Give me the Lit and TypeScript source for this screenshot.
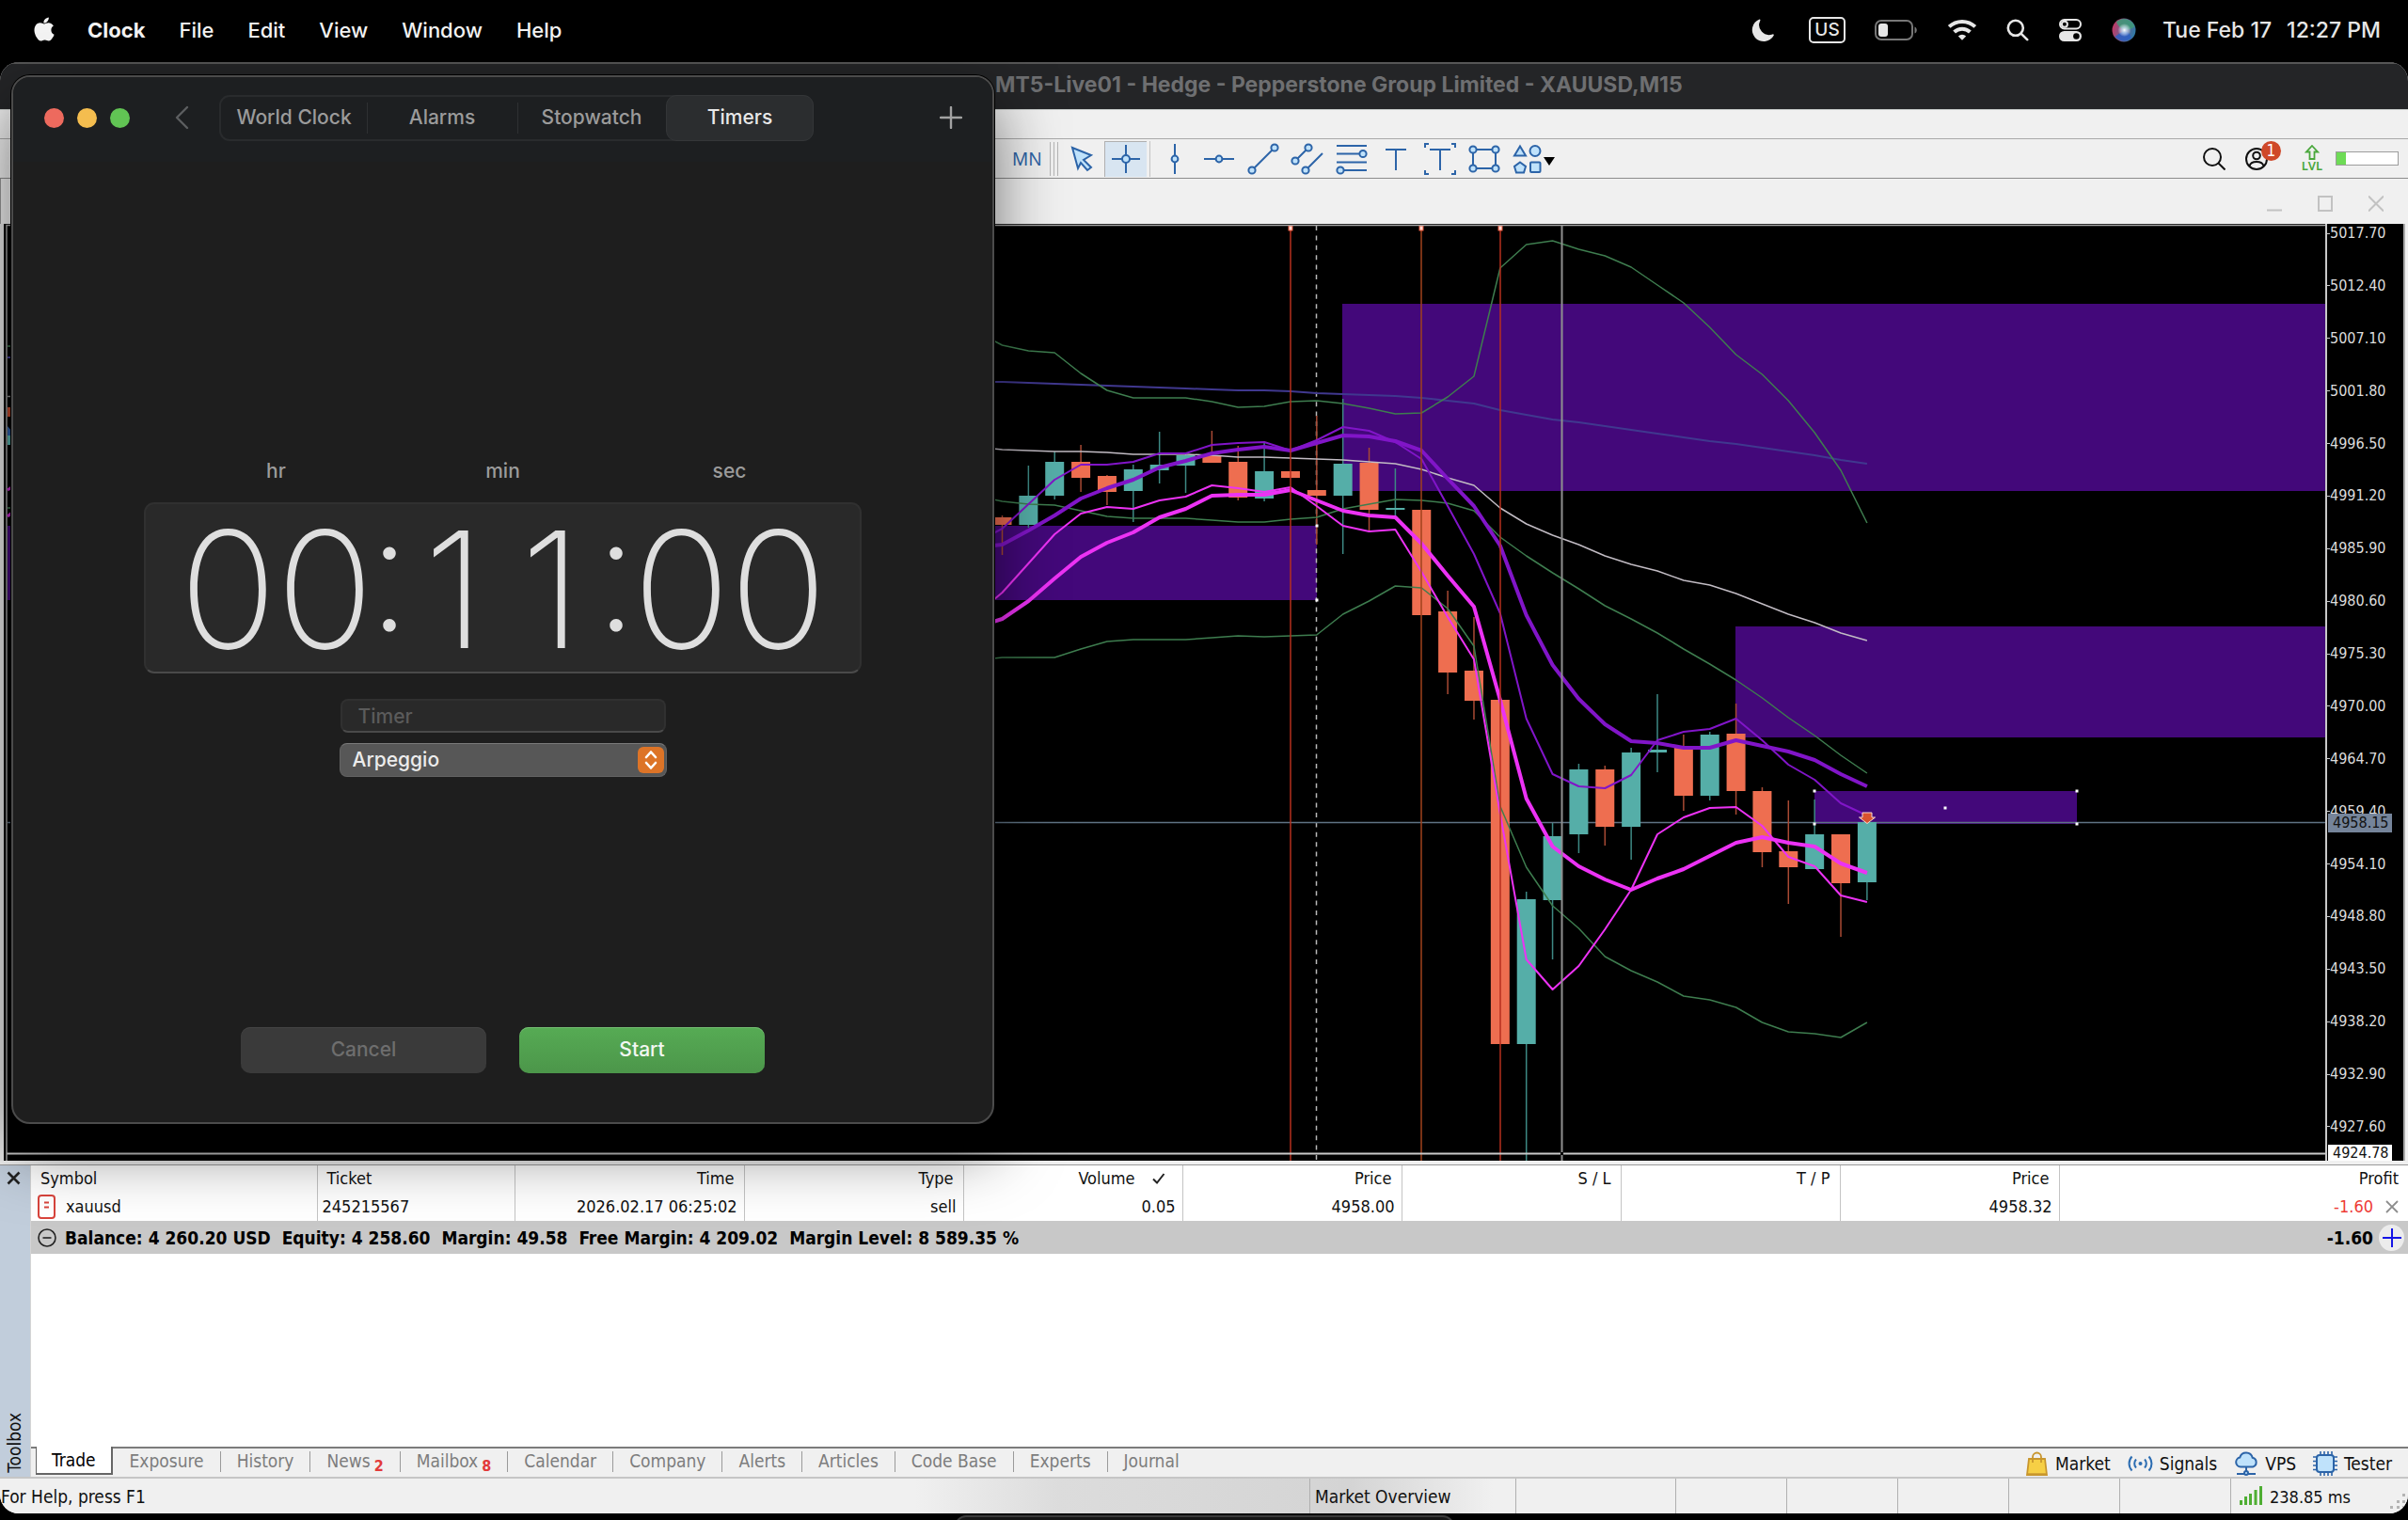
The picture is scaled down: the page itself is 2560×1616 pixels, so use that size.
import { LitElement, html, svg, css, nothing } from "lit";
import { customElement, property } from "lit/decorators.js";
import { classMap } from "lit/directives/class-map.js";

type Point = [number, number];

const UI = css`
  :host {
    --sans: Inter, "Liberation Sans", sans-serif;
    --tahoma: "DejaVu Sans Condensed", "DejaVu Sans", "Noto Sans", sans-serif;
  }
  * {
    box-sizing: border-box;
  }
  button {
    appearance: none;
    border: 0;
    padding: 0;
    margin: 0;
    background: none;
    color: inherit;
    font: inherit;
  }
  a {
    color: inherit;
    text-decoration: none;
  }
  svg {
    display: block;
  }
`;

/* ---------- macOS menu bar ---------- */

@customElement("mac-menu-bar")
export class MacMenuBar extends LitElement {
  static styles = [
    UI,
    css`
      :host {
        display: block;
        background: #000;
        color: #fff;
        font: 500 22px/28px var(--sans);
      }
      .bar {
        display: flex;
        justify-content: space-between;
        align-items: center;
        height: 66px;
        padding: 0 29px 2px 35px;
      }
      .menus,
      .status {
        display: flex;
        align-items: center;
        color: #f4f4f4;
      }
      .menus {
        gap: 36px;
      }
      .app {
        margin-left: -2px;
        font-weight: 700;
      }
      .status {
        gap: 31px;
        color: #e6e6e6;
      }
      .focus {
        margin-right: 5px;
      }
      .layout {
        border: 2px solid #e6e6e6;
        border-radius: 5px;
        width: 39px;
        height: 28px;
        font: 500 19px/24px var(--sans);
        text-align: center;
      }
      .clock {
        display: flex;
        gap: 16px;
        margin-left: -3px;
        font-size: 23px;
        white-space: nowrap;
      }
    `,
  ];

  render() {
    return html`<header class="bar">
      <nav class="menus" aria-label="Menu bar">
        <button aria-label="Apple">
          <svg width="24" height="28" viewBox="0 0 24 28" fill="currentColor">
            <path d="M16.8 0.4c.2 1.600-.4 3.100-1.400 4.300-1 1.200-2.500 2-4 1.900-.2-1.500.5-3.100 1.400-4.100C13.800 1.300 15.500.5 16.800.4z" />
            <path d="M21.900 9.600c-1.500.9-2.500 2.400-2.500 4.300 0 2.200 1.300 4 3.200 4.800-.4 1.300-1 2.500-1.800 3.600-1.100 1.600-2.200 3.200-4 3.200-1.700 0-2.200-1-4.200-1s-2.600 1-4.200 1.100c-1.700.1-3-1.700-4.100-3.300C2 19 .3 13.200 2.600 9.400c1.100-1.900 3.100-3.100 5.200-3.100 1.700 0 3.200 1.100 4.200 1.100 1 0 2.900-1.400 4.900-1.200 1.200.1 3.600.5 5 3.400z" />
          </svg>
        </button>
        <button class="app">Clock</button>
        ${["File", "Edit", "View", "Window", "Help"].map((m) => html`<button>${m}</button>`)}
      </nav>
      <div class="status">
        <svg class="focus" width="26" height="26" viewBox="0 0 26 26" fill="currentColor" role="img" aria-label="Focus on">
          <path d="M9.500 1.500a1 1 0 0 1 .8 1.400A10.500 10.500 0 0 0 23.400 17.400a1 1 0 0 1 1.300 1.300A12.200 12.200 0 1 1 9.500 1.500z" />
        </svg>
        <span class="layout">US</span>
        <svg width="46" height="22" viewBox="0 0 46 22" role="img" aria-label="Battery">
          <rect x="1" y="1" width="39" height="20" rx="6" fill="none" stroke="#777" stroke-width="2" />
          <rect x="4" y="4" width="10" height="14" rx="3" fill="currentColor" />
          <path d="M42.500 7.500c3 1 3 6 0 7z" fill="#777" />
        </svg>
        <svg width="32" height="24" viewBox="0 0 32 24" role="img" aria-label="Wi-Fi" fill="none" stroke="currentColor" stroke-width="4">
          <path d="M2.200 8.400a20 20 0 0 1 27.600 0" />
          <path d="M7.600 14a12.300 12.300 0 0 1 16.800 0" />
          <path d="M16 22.800l-4.200-4.400a6 6 0 0 1 8.400 0z" fill="currentColor" stroke="none" />
        </svg>
        <svg width="24" height="24" viewBox="0 0 24 24" role="img" aria-label="Search" fill="none" stroke="currentColor" stroke-width="2.600" stroke-linecap="round">
          <circle cx="9.800" cy="9.800" r="8" />
          <path d="M15.800 15.800l6.400 6.400" />
        </svg>
        <svg width="26" height="26" viewBox="0 0 26 26" role="img" aria-label="Control Center">
          <rect x="2" y="2" width="22" height="9.500" rx="4.700" fill="none" stroke="currentColor" stroke-width="2" />
          <circle cx="6.900" cy="6.700" r="3" fill="none" stroke="currentColor" stroke-width="2" />
          <rect x="1" y="14" width="24" height="11" rx="5.500" fill="currentColor" />
          <circle cx="19.400" cy="19.500" r="3.300" fill="#000" />
        </svg>
        <svg width="26" height="26" viewBox="0 0 26 26" role="img" aria-label="Siri">
          <defs>
            <radialGradient id="core"><stop offset="0" stop-color="#fff" /><stop offset=".35" stop-color="#cfe3f5" stop-opacity=".8" /><stop offset="1" stop-color="#fff" stop-opacity="0" /></radialGradient>
            <linearGradient id="orb" x1="0" y1=".3" x2="1" y2=".6"><stop offset="0" stop-color="#c8355f" /><stop offset=".4" stop-color="#7d5a8c" /><stop offset="1" stop-color="#2c7aa6" /></linearGradient>
          </defs>
          <circle cx="13" cy="13" r="12.500" fill="url(#orb)" />
          <path d="M5 4a12.400 12.400 0 0 1 19.500 5c-4 4-9 4-12 3S6 8 5 4z" fill="#3d9a78" opacity=".85" />
          <path d="M3.500 20c3-2 6-5 9.500-5.500s7 2 8 7a12.400 12.400 0 0 1-17.500-1.500z" fill="#2d5fc4" opacity=".85" />
          <circle cx="13.500" cy="13" r="7" fill="url(#core)" />
        </svg>
        <time class="clock"><span>Tue Feb 17</span><span>12:27 PM</span></time>
      </div>
    </header>`;
  }
}

/* ---------- price chart ---------- */

const STEP = 27.86;
const barX = (k: number) => 1065.5 + STEP * k;

/* [bullish, body top, body bottom, wick top, wick bottom] */
const CANDLES: [number, number, number, number, number][] = [
  [0, 550, 558, 548, 590], [1, 527, 558, 495, 561], [1, 491, 527, 480, 531], [0, 491, 508, 473, 523],
  [0, 506, 523, 505, 537], [1, 499, 522, 494, 555], [1, 494, 500, 459, 514], [1, 484, 495, 482, 524],
  [0, 484, 492, 458, 492], [0, 491, 529, 474, 532], [1, 501, 530, 471, 533], [0, 501, 508, 501, 508],
  [0, 521, 527, 442, 579], [1, 493, 527, 424, 589], [0, 492, 542, 476, 565], [1, 540, 542, 498, 552],
  [0, 542, 654, 542, 654], [0, 650, 715, 628, 738], [0, 713, 745, 656, 765], [0, 744, 1110, 744, 1110],
  [1, 956, 1110, 948, 1234], [1, 889, 957, 875, 1020], [1, 818, 887, 812, 907], [0, 818, 879, 814, 899],
  [1, 800, 879, 795, 914], [1, 797, 800, 738, 821], [0, 795, 846, 781, 862], [1, 781, 846, 778, 851],
  [0, 780, 841, 748, 866], [0, 841, 906, 837, 922], [0, 905, 922, 851, 961], [1, 887, 924, 850, 924],
  [0, 887, 939, 887, 996], [1, 874, 938, 874, 957],
];

interface Series {
  name: string;
  start: number;
  values: number[];
}

/* One value per bar; `start` is the level at the left edge of the visible range. */
const SERIES: Series[] = [
  { name: "slate", start: 406, values: [406, 407, 408, 409, 410, 411, 412, 413, 414, 415, 415, 416, 418, 419, 420, 421, 423, 426, 429, 436, 441, 446, 449, 453, 457, 461, 465, 469, 472, 476, 480, 484, 489, 493] },
  { name: "band", start: 362, values: [367, 373, 375, 397, 415, 423, 423, 423, 427, 433, 432, 427, 426, 429, 434, 440, 439, 422, 400, 285, 260, 256, 265, 272, 284, 303, 322, 348, 377, 398, 426, 460, 500, 556] },
  { name: "band", start: 531, values: [533, 536, 537, 543, 549, 551, 551, 551, 553, 555, 555, 552, 550, 541, 536, 531, 532, 535, 543, 571, 591, 609, 626, 644, 658, 673, 690, 706, 723, 742, 763, 782, 803, 822] },
  { name: "band", start: 700, values: [699, 699, 699, 690, 682, 680, 680, 680, 678, 676, 677, 676, 675, 653, 639, 623, 625, 647, 687, 857, 922, 963, 987, 1017, 1032, 1044, 1059, 1063, 1071, 1087, 1097, 1099, 1103, 1087] },
  { name: "mean", start: 477, values: [478, 479, 480, 480, 481, 483, 483, 483, 484, 486, 486, 487, 488, 489, 491, 493, 499, 508, 516, 540, 557, 569, 579, 591, 600, 607, 617, 622, 631, 642, 653, 662, 673, 681] },
  { name: "violet", start: 567, values: [562, 536, 510, 494, 494, 491, 482, 482, 473, 471, 470, 479, 468, 454, 458, 470, 488, 538, 589, 652, 764, 823, 836, 838, 824, 787, 778, 775, 764, 787, 813, 829, 854, 867] },
  { name: "violet thick", start: 580, values: [579, 564, 548, 530, 519, 510, 497, 490, 482, 478, 475, 479, 471, 463, 464, 469, 479, 509, 538, 580, 654, 707, 743, 770, 788, 790, 795, 795, 787, 793, 799, 808, 823, 836] },
  { name: "pink", start: 638, values: [630, 599, 568, 546, 539, 541, 532, 528, 516, 519, 523, 518, 538, 559, 565, 563, 608, 656, 701, 865, 1020, 1052, 1027, 988, 946, 887, 869, 859, 858, 878, 911, 921, 952, 959] },
  { name: "pink thick", start: 661, values: [658, 639, 615, 592, 577, 566, 550, 541, 527, 526, 526, 521, 532, 543, 548, 550, 578, 612, 645, 744, 849, 900, 921, 935, 946, 934, 924, 910, 896, 890, 896, 900, 918, 928] },
];

const ZONES: [number, number, number, number][] = [
  [8, 559, 1400, 638],
  [1427, 323, 2472, 522],
  [1845, 666, 2472, 784],
  [1929, 841, 2208, 876],
];

const SESSIONS: [number, string][] = [[1372, "red"], [1511, "amber"], [1595, "red"]];
const ANCHORS: Point[] = [[1400, 559], [1400, 638], [1929, 841], [1929, 876], [2208, 841], [2208, 876], [2068, 859]];

const PRICES = ["5017.70", "5012.40", "5007.10", "5001.80", "4996.50", "4991.20", "4985.90", "4980.60", "4975.30", "4970.00", "4964.70", "4959.40", "4954.10", "4948.80", "4943.50", "4938.20", "4932.90", "4927.60"];

@customElement("price-chart")
export class PriceChart extends LitElement {
  static styles = [
    UI,
    css`
      :host {
        display: flex;
        background: #000;
      }
      .plot {
        flex: 1;
        min-width: 0;
        position: relative;
      }
      .canvas {
        position: absolute;
        inset: 0;
        width: 100%;
        height: 100%;
      }
      .zone { fill: #43087a; }
      .line { fill: none; stroke-width: 1.500; stroke-linejoin: round; }
      .band { stroke: #3e7d4f; }
      .slate { stroke: #40388f; stroke-width: 2; }
      .mean { stroke: #c2bcc4; }
      .violet { stroke: #8115c8; stroke-width: 2; }
      .pink { stroke: #ec32f4; stroke-width: 2; }
      .thick { stroke-width: 4; }
      .up { fill: #55aea8; }
      .down { fill: #ee6e50; }
      .upwick { stroke: #3d8984; stroke-width: 1.500; }
      .downwick { stroke: #a94a34; stroke-width: 1.500; }
      .red { stroke: #b62f1e; stroke-width: 1.500; }
      .amber { stroke: #a1421d; stroke-width: 1.500; }
      .axis {
        width: 83px;
        position: relative;
        border-left: 2px solid #c9c9c9;
        color: #dcdcdc;
        font: 16px/20px var(--tahoma);
      }
      .levels {
        list-style: none;
        margin: 0;
        padding: 0 0 26px;
        height: 100%;
        display: flex;
        flex-direction: column;
        justify-content: space-between;
      }
      .level {
        display: flex;
        align-items: center;
      }
      .level::before {
        content: "";
        width: 3px;
        height: 1px;
        background: #c9c9c9;
      }
      .tag {
        position: absolute;
        left: 1px;
        width: 68px;
        padding-left: 5px;
        color: #111;
      }
      .bid {
        top: 63%;
        background: #75849a;
      }
      .cursor {
        bottom: 0;
        background: #fff;
        line-height: 17px;
      }
    `,
  ];

  private line(s: Series) {
    const pts = [`1056,${s.start}`, ...s.values.map((v, k) => `${barX(k).toFixed(1)},${v}`)];
    return svg`<polyline class="line ${s.name}" points=${pts.join(" ")} />`;
  }

  private candle(c: (typeof CANDLES)[number], k: number) {
    const [up, top, bottom, high, low] = c;
    const x = barX(k);
    return svg`
      <line class=${up ? "upwick" : "downwick"} x1=${x} x2=${x} y1=${high} y2=${low} />
      <rect class=${up ? "up" : "down"} x=${x - 10} y=${top} width="20" height=${bottom - top} />`;
  }

  render() {
    return html`
      <div class="plot">
        <svg class="canvas" viewBox="4 238 2468 996" preserveAspectRatio="none" role="img" aria-label="XAUUSD M15 candlestick chart">
          ${ZONES.map(([x1, y1, x2, y2]) => svg`<rect class="zone" x=${x1} y=${y1} width=${x2 - x1} height=${y2 - y1} />`)}
          <path d="M1399.500 240V1234" stroke="#b9b9b9" stroke-width="1.500" stroke-dasharray="5 5.400" fill="none" />
          <path d="M8 874.500H2472" stroke="#5f7384" stroke-width="1.500" />
          ${CANDLES.map((c, k) => this.candle(c, k))}
          ${SERIES.map((s) => this.line(s))}
          ${SESSIONS.map(([x, tone]) => svg`
            <line class=${tone} x1=${x} x2=${x} y1="240" y2="1234" />
            <rect x=${x - 2} y="240" width="4" height="5" fill="#ffd8cf" stroke="#ee5a3f" stroke-width="1" />`)}
          <path d="M1660.500 240V1234" stroke="#8f8f8f" stroke-width="2" />
          <path d="M7 1226.500H2472" stroke="#c9c9c9" stroke-width="2" />
          <rect x="1659" y="1225" width="3" height="3" fill="#000" />
          <path d="M7 1234V239.500H2472" stroke="#a4a4a4" stroke-width="1.500" fill="none" />
          ${ANCHORS.map(([x, y]) => svg`<rect x=${x - 1.5} y=${y - 1.5} width="3" height="3" fill="#fff" />`)}
          <path d="M1980 864h10v5h3.500l-8.500 6.500-8.500-6.500h3.500z" fill="#d8522e" stroke="#f7d9cf" stroke-width="1" />
          <g>
            <path d="M8 368h5" stroke="#3e7d4f" stroke-width="1.500" />
            <path d="M8 380h5" stroke="#40388f" stroke-width="2" />
            <path d="M8 421.500h5" stroke="#888" stroke-width="1.500" />
            <path d="M8 433h4v10h-4z" fill="#c04a2c" />
            <path d="M8 453l5 6v4h-5z" fill="#2d5fa8" />
            <path d="M8 463h5v10h-5z" fill="#55aea8" />
            <path d="M8 521l6-4M8 549l6-5" stroke="#c028c8" stroke-width="3" />
            <path d="M8 540h5" stroke="#3e7d4f" stroke-width="1.500" />
          </g>
        </svg>
      </div>
      <div class="axis">
        <ol class="levels">
          ${PRICES.map((p) => html`<li class="level">${p}</li>`)}
        </ol>
        <span class="tag bid">4958.15</span>
        <span class="tag cursor">4924.78</span>
      </div>
    `;
  }
}

/* ---------- MetaTrader window ---------- */

const dot = (x: number, y: number, r = 3.4) => svg`<ellipse cx=${x} cy=${y} rx=${r} ry=${r} />`;

const TOOLS: { label: string; art: unknown; active?: boolean; gap?: boolean }[] = [
  { label: "Cursor", art: svg`<path d="M13 7l20 8-8 5 8 8-4 3-7-8-3 6z" />` },
  { label: "Crosshair", active: true, art: svg`<path d="M23 4v30M8 19h30" />${dot(23, 19, 4)}` },
  { label: "Vertical line", gap: true, art: svg`<path d="M23 3v32" />${dot(23, 19)}` },
  { label: "Horizontal line", art: svg`<path d="M7 19h32" />${dot(23, 19)}` },
  { label: "Trendline", art: svg`<path d="M11 31L35 7" />${dot(11, 31, 3.6)}${dot(35, 7, 3.6)}` },
  { label: "Channel", art: svg`<path d="M10 21L24 7M21 31L39 13" />${dot(10, 21, 3.6)}${dot(24, 7, 3.6)}${dot(21, 31, 3.6)}` },
  { label: "Fibonacci", art: svg`<path d="M7 5h32M7 13.500h28M7 22.500h32M11 31h28" />${dot(35, 13.5, 3.6)}${dot(11, 31, 3.6)}` },
  { label: "Text", art: svg`<path d="M12 9h22M23 9v22" />` },
  { label: "Label", art: svg`<path d="M12 9h22M23 9v22M7 7V3h4M35 3h4v4M7 31v4h4M35 35h4v-4" fill="none" />` },
  { label: "Rectangle", art: svg`<path d="M11 9h24v20H11z" fill="none" />${dot(11, 9, 3.6)}${dot(35, 9, 3.6)}${dot(11, 29, 3.6)}${dot(35, 29, 3.6)}` },
  { label: "Shapes", art: svg`<path d="M14 5.500l6 10H8z" /><circle cx="30" cy="10.500" r="5.500" /><path d="M14 22.500l6 4.500-2 6.500h-8l-2-6.500z" /><rect x="25" y="22.500" width="10.500" height="10.500" rx="1" />` },
];

const COLUMNS = [
  { head: "Symbol", cell: "xauusd" },
  { head: "Ticket", cell: "245215567" },
  { head: "Time", cell: "2026.02.17 06:25:02", end: true },
  { head: "Type", cell: "sell", end: true },
  { head: "Volume", cell: "0.05", end: true },
  { head: "Price", cell: "4958.00", end: true },
  { head: "S / L", cell: "", end: true },
  { head: "T / P", cell: "", end: true },
  { head: "Price", cell: "4958.32", end: true },
  { head: "Profit", cell: "-1.60", end: true },
];

const TABS: [string, string?][] = [["Trade"], ["Exposure"], ["History"], ["News", "2"], ["Mailbox", "8"], ["Calendar"], ["Company"], ["Alerts"], ["Articles"], ["Code Base"], ["Experts"], ["Journal"]];

@customElement("trade-toolbox")
export class TradeToolbox extends LitElement {
  static styles = [
    UI,
    css`
      :host {
        display: grid;
        grid-template-columns: 33px 1fr;
        background: #fff;
        color: #111;
        font: 18px/24px var(--tahoma);
      }
      .rail {
        display: flex;
        flex-direction: column;
        justify-content: space-between;
        align-items: center;
        padding: 6px 3px 4px 0;
        background: #c1cddb;
        border-right: 1px solid #d5d5d5;
      }
      .name {
        writing-mode: vertical-rl;
        rotate: 180deg;
        font-size: 19px;
        line-height: 22px;
      }
      .main {
        display: flex;
        flex-direction: column;
        min-width: 0;
      }
      .orders {
        width: 100%;
        border-collapse: collapse;
        table-layout: fixed;
        white-space: pre;
      }
      .orders th,
      .orders td {
        padding: 0 7px 1px 5px;
        border-right: 1px solid #c4c4c4;
        font-weight: 400;
        text-align: left;
        height: 29px;
      }
      .orders th {
        padding: 0 10px 2px;
        height: 30px;
      }
      .orders .end {
        text-align: right;
      }
      .orders th:last-child,
      .orders td:last-child {
        border-right: 0;
      }
      .orders .c0 { width: 304px; }
      .orders .c1 { width: 210px; }
      .orders .c2 { width: 244px; }
      .orders .mid { width: 233px; }
      .sym,
      .loss,
      .sorted {
        display: flex;
        align-items: center;
      }
      .sym {
        gap: 10px;
        padding-left: 2px;
      }
      .sorted {
        justify-content: flex-end;
        gap: 18px;
        padding-right: 8px;
      }
      .loss {
        justify-content: flex-end;
        gap: 13px;
        padding-right: 3px;
        color: #ee3b34;
      }
      .summary {
        display: flex;
        align-items: center;
        height: 35px;
        padding: 0 4px 0 7px;
        background: #c8c8c8;
        color: #000;
        font-size: 19px;
        font-weight: 700;
        white-space: pre;
      }
      .summary .figures {
        flex: 1;
        padding-left: 9px;
      }
      .add {
        display: grid;
        place-items: center;
        width: 27px;
        height: 28px;
        margin-left: 6px;
        border-radius: 50%;
        background: #ececec;
      }
      .empty {
        flex: 1;
      }
      .strip {
        display: flex;
        justify-content: space-between;
        height: 32px;
        background: #f0f0f0;
        border-top: 2px solid #7c7c7c;
        font-size: 19px;
      }
      .tabs,
      .services {
        display: flex;
      }
      .tabs {
        padding-left: 5px;
      }
      .tab {
        position: relative;
        padding: 0 17px 5px 18px;
        color: #7d7d7d;
        white-space: nowrap;
      }
      .tab + .tab::before {
        content: "";
        position: absolute;
        left: 0;
        top: 3px;
        height: 22px;
        border-left: 1px solid #9a9a9a;
      }
      .tab.on + .tab::before {
        display: none;
      }
      .tab.on {
        margin: -2px 0 2px;
        padding: 2px 16px 3px;
        background: #fff;
        color: #000;
        border: 2px solid #666;
        border-top: 0;
        border-left-width: 1px;
      }
      .count {
        margin-left: 4px;
        color: #e23a3a;
        font: 700 16px/12px var(--tahoma);
        vertical-align: -4px;
      }
      .services {
        gap: 18px;
        align-items: center;
        padding: 2px 17px 0 0;
      }
      .service {
        display: flex;
        align-items: center;
        gap: 7px;
        white-space: nowrap;
      }
    `,
  ];

  private widthClass(i: number) {
    return i < 3 ? `c${i}` : i < 9 ? "mid" : "";
  }

  private cell(i: number, text: string) {
    if (i === 0)
      return html`<span class="sym"><svg width="20" height="26" viewBox="0 0 20 26" fill="none" stroke="#d8443c" stroke-width="2"><rect x="1" y="1" width="17" height="24" rx="3" /><path d="M7 8.500h5M7 13.500h5" /></svg>${text}</span>`;
    if (i === 9)
      return html`<span class="loss">${text}<button aria-label="Close position"><svg width="14" height="14" viewBox="0 0 14 14" stroke="#8c8c8c" stroke-width="1.800"><path d="M1 1l12 12M13 1L1 13" /></svg></button></span>`;
    return text;
  }

  render() {
    return html`
      <div class="rail">
        <button aria-label="Close toolbox"><svg width="15" height="15" viewBox="0 0 15 15" stroke="#222" stroke-width="2.600"><path d="M1.500 1.500l12 12M13.500 1.500l-12 12" /></svg></button>
        <span class="name">Toolbox</span>
      </div>
      <div class="main">
        <table class="orders">
          <thead>
            <tr>
              ${COLUMNS.map((c, i) => html`<th scope="col" class="${this.widthClass(i)} ${c.end ? "end" : ""}">${c.head === "Volume"
                ? html`<span class="sorted">Volume<svg width="14" height="12" viewBox="0 0 14 12" fill="none" stroke="#222" stroke-width="2"><path d="M1 6.500l4 4L12.500 1" /></svg></span>`
                : c.head}</th>`)}
            </tr>
          </thead>
          <tbody>
            <tr>
              ${COLUMNS.map((c, i) => html`<td class=${c.end ? "end" : ""}>${this.cell(i, c.cell)}</td>`)}
            </tr>
          </tbody>
        </table>
        <div class="summary">
          <svg width="20" height="20" viewBox="0 0 20 20" fill="none" stroke="#222" stroke-width="1.600"><circle cx="10" cy="10" r="9" /><path d="M5.500 10h9" /></svg>
          <span class="figures">Balance: 4 260.20 USD  Equity: 4 258.60  Margin: 49.58  Free Margin: 4 209.02  Margin Level: 8 589.35 %</span>
          <span>-1.60</span>
          <button class="add" aria-label="New order"><svg width="20" height="20" viewBox="0 0 20 20" stroke="#1414e6" stroke-width="2"><path d="M10 0v20M0 10h20" /></svg></button>
        </div>
        <div class="empty"></div>
        <div class="strip">
          <nav class="tabs" aria-label="Toolbox tabs">
            ${TABS.map(([name, count], i) => html`<button class=${classMap({ tab: true, on: i === 0 })}>${name}${count ? html`<span class="count">${count}</span>` : nothing}</button>`)}
          </nav>
          <nav class="services" aria-label="Services">
            <a class="service" href="#market"><svg width="24" height="26" viewBox="0 0 24 26" stroke="#c8962e" stroke-width="1.800"><path d="M3 8h17l2 17H1z" fill="#f6cf45" /><path d="M1.500 24.500h20" stroke-width="2.400" /><path d="M7 12V6a4.500 4.500 0 0 1 9 0v6" fill="none" /></svg>Market</a>
            <a class="service" href="#signals"><svg width="27" height="18" viewBox="0 0 27 18" fill="none" stroke="#2c6db2" stroke-width="2"><circle cx="13.500" cy="9" r="2" fill="#2c6db2" stroke="none" /><path d="M9 4.500a6.500 6.500 0 0 0 0 9M18 4.500a6.500 6.500 0 0 1 0 9M4.500 1.500a11 11 0 0 0 0 15M22.500 1.500a11 11 0 0 1 0 15" /></svg>Signals</a>
            <a class="service" href="#vps"><svg width="26" height="26" viewBox="0 0 26 26" fill="#bfe2fb" stroke="#2c64a8" stroke-width="2"><path d="M7 16.500a5 5 0 0 1-.8-9.900 7 7 0 0 1 13.500.2A5 5 0 0 1 20 16.500z" /><path d="M13 16.500V24M3 24h20" /><circle cx="13" cy="23" r="2" /></svg>VPS</a>
            <a class="service" href="#tester"><svg width="26" height="26" viewBox="0 0 26 26" fill="#bfe2fb" stroke="#2c64a8" stroke-width="2"><path d="M8 0v26M12 0v26M16 0v26M20 0v26M0 6h26M0 10.500h26M0 15h26M0 19.500h26" stroke-width="1.600" /><rect x="4" y="4" width="18" height="18" rx="3" /></svg>Tester</a>
          </nav>
        </div>
      </div>
    `;
  }
}

@customElement("trade-window")
export class TradeWindow extends LitElement {
  static styles = [
    UI,
    css`
      :host {
        display: flex;
        flex-direction: column;
        overflow: hidden;
        border-radius: 20px;
        background: #f0f0f0;
        color: #111;
        font: 18px/24px var(--tahoma);
      }
      .title {
        height: 50px;
        padding: 0 0 4px 1058px;
        background: #242527;
        border-top: 2px solid #565656;
        color: #6e6f71;
        font: 700 23px/44px var(--sans);
        white-space: nowrap;
      }
      .menu {
        height: 32px;
        border-top: 1px solid #c9cdcb;
        border-bottom: 1px solid #a9a9a9;
      }
      .toolbar {
        display: flex;
        align-items: center;
        height: 42px;
        padding: 0 10px 0 1076px;
        border-bottom: 1px solid #8c8c8c;
      }
      .frame {
        color: #2f64a6;
        width: 38px;
        text-align: left;
        font: 19px/24px "Noto Sans", sans-serif;
      }
      .grip {
        width: 9px;
        height: 36px;
        margin: 0 2px;
        border: solid #b5b5b5;
        border-width: 0 1px;
        background: linear-gradient(90deg, transparent 3px, #b5b5b5 3px, #b5b5b5 4px, transparent 4px);
      }
      .tool {
        width: 47px;
        height: 38px;
      }
      .tool svg {
        fill: #bfe2fb;
        stroke: #2c64a8;
        stroke-width: 2;
      }
      .tool.on {
        background: #d8e5f1;
        box-shadow: inset 1px 1px #b0b0b0;
        width: 45px;
      }
      .tool.gap {
        margin-left: 7px;
        box-shadow: -3px 0 #f0f0f0, -4px 0 #c4c4c4;
      }
      .arrow {
        border: 6px solid transparent;
        border-top: 9px solid #000;
        border-bottom: 0;
        margin: 6px 0 0 -8px;
      }
      .right {
        display: flex;
        align-items: center;
        margin-left: auto;
      }
      .account {
        position: relative;
        margin-left: 21px;
      }
      .badge {
        position: absolute;
        left: 17px;
        top: -7px;
        width: 21px;
        height: 21px;
        border-radius: 50%;
        background: #cf4829;
        color: #fff;
        font: 17px/21px var(--tahoma);
        text-align: center;
      }
      .lvl {
        display: grid;
        justify-items: center;
        margin-left: 36px;
        color: #4aa73c;
        font: 600 13px/13px "Noto Sans", sans-serif;
      }
      .progress {
        width: 67px;
        height: 15px;
        margin-left: 14px;
        border: 1px solid #9c9c9c;
        background: linear-gradient(90deg, #6edb56 10px, #fff 10px);
      }
      .caption {
        display: flex;
        justify-content: flex-end;
        align-items: center;
        gap: 38px;
        height: 48px;
        padding: 5px 26px 0;
        border-left: 1px solid #999;
      }
      .chart {
        flex: 996 1 0;
        min-height: 400px;
        margin: 0 3px 0 0;
        border-left: 4px solid #e6e6e6;
        border-right: 2px solid #aaa;
      }
      .split {
        height: 5px;
        border-bottom: 1px solid #9a9a9a;
      }
      .toolbox {
        flex: 331 1 0;
        min-height: 200px;
      }
      .statusbar {
        display: flex;
        height: 39px;
        border-top: 2px solid #c6c6c6;
        background: linear-gradient(90deg, #f0f0f0 38%, #dcdcdc 44%, #d4d4d4 56%, #f0f0f0 62%);
        font-size: 19px;
      }
      .statusbar > span {
        border-left: 1px solid #b0b0b0;
        padding: 7px 0 0 5px;
        white-space: nowrap;
      }
      .statusbar > .help {
        flex: 1;
        border: 0;
        padding-left: 1px;
      }
      .w219 { width: 219px; }
      .w170 { width: 170px; }
      .w118 { width: 118px; }
      .statusbar > .net {
        position: relative;
        display: flex;
        gap: 8px;
        width: 189px;
        padding: 8px 0 0 9px;
        font-size: 18px;
      }
      .corner {
        position: absolute;
        right: 2px;
        bottom: 4px;
      }
    `,
  ];

  render() {
    return html`
      <header class="title">MT5-Live01 - Hedge - Pepperstone Group Limited - XAUUSD,M15</header>
      <div class="menu"></div>
      <div class="toolbar" role="toolbar" aria-label="Drawing tools">
        <button class="frame">MN</button>
        <span class="grip"></span>
        ${TOOLS.map((t) => html`<button class=${classMap({ tool: true, on: !!t.active, gap: !!t.gap })} aria-label=${t.label}><svg width="46" height="38" viewBox="0 0 46 38">${t.art}</svg></button>`)}
        <span class="arrow"></span>
        <div class="right">
          <button aria-label="Search"><svg width="24" height="24" viewBox="0 0 24 24" fill="none" stroke="#111" stroke-width="2"><circle cx="10" cy="10" r="9" /><path d="M16.500 16.500L23.500 23.500" /></svg></button>
          <button class="account" aria-label="Account">
            <svg width="24" height="24" viewBox="0 0 24 24" fill="none" stroke="#111" stroke-width="2"><circle cx="12" cy="12" r="11" /><circle cx="12" cy="8.500" r="3.800" /><path d="M4.500 19.500c1.500-6 13.500-6 15 0" /></svg>
            <span class="badge">1</span>
          </button>
          <span class="lvl"><svg width="16" height="16" viewBox="0 0 16 16" fill="none" stroke="#4aa73c" stroke-width="1.800"><path d="M8 1l6 6.500h-3.500V15h-5V7.500H2z" /></svg>LVL</span>
          <span class="progress"></span>
        </div>
      </div>
      <div class="caption">
        <button aria-label="Minimize"><svg width="16" height="17" viewBox="0 0 16 17"><path d="M0 15.500h16" stroke="#c2c2c2" stroke-width="2" /></svg></button>
        <button aria-label="Maximize"><svg width="16" height="17" viewBox="0 0 16 17"><path d="M1 1h14v15H1z" fill="none" stroke="#c2c2c2" stroke-width="2" /></svg></button>
        <button aria-label="Close"><svg width="16" height="17" viewBox="0 0 16 17"><path d="M0 0.500l16 16M16 0.500l-16 16" stroke="#c2c2c2" stroke-width="2" /></svg></button>
      </div>
      <price-chart class="chart"></price-chart>
      <div class="split"></div>
      <trade-toolbox class="toolbox"></trade-toolbox>
      <footer class="statusbar">
        <span class="help">For Help, press F1</span>
        <span class="w219">Market Overview</span>
        <span class="w170"></span>
        <span class="w118"></span>
        <span class="w118"></span>
        <span class="w118"></span>
        <span class="w118"></span>
        <span class="w118"></span>
        <span class="net">
          <svg width="24" height="20" viewBox="0 0 24 20" fill="#4fae33"><path d="M0 15h3v5H0zM5 11h3v9H5zM10 8h3v12h-3zM15.500 4h3v16h-3zM21 0h3v20h-3z" /></svg>
          238.85 ms
          <svg class="corner" width="17" height="17" viewBox="0 0 17 17" fill="#b4b4b4"><path d="M13 0h3v3h-3zM7 7h3v3H7zM13 7h3v3h-3zM0 13h3v3H0zM7 13h3v3H7zM13 13h3v3h-3z" /></svg>
        </span>
      </footer>
    `;
  }
}

/* ---------- Clock window ---------- */

@customElement("clock-window")
export class ClockWindow extends LitElement {
  @property({ type: Array }) fields: [string, string][] = [["hr", "00"], ["min", "11"], ["sec", "00"]];

  static styles = [
    UI,
    css`
      :host {
        display: flex;
        flex-direction: column;
        overflow: hidden;
        border: 2px solid #4b4b4b;
        border-radius: 20px;
        background: #1e1e1e;
        color: #9b9b9b;
        font: 500 21px/28px var(--sans);
        box-shadow: 0 0 0 1px #000, 0 26px 70px rgba(0, 0, 0, 0.55);
      }
      .bar {
        display: flex;
        align-items: center;
        height: 90px;
        padding: 0 32px 4px 33px;
        background: #1d1f21;
      }
      .lights {
        display: flex;
        gap: 14px;
      }
      .light {
        width: 21px;
        height: 21px;
        border-radius: 50%;
      }
      .close { background: #ed6a5e; }
      .mini { background: #f4bd4f; }
      .zoom { background: #61c454; }
      .back {
        margin-left: 48px;
      }
      .tabs {
        display: grid;
        grid-template-columns: 155px 160px 158px 155px;
        height: 49px;
        margin-left: 32px;
        border: 2px solid #292b2d;
        border-radius: 11px;
      }
      .tab {
        position: relative;
      }
      .tab + .tab:not(.on)::before {
        content: "";
        position: absolute;
        left: 0;
        top: 6px;
        bottom: 6px;
        border-left: 1px solid #2e3032;
      }
      .tab.on {
        margin: -2px -2px -2px 0;
        border-radius: 11px;
        background: #2b2d2f;
        border: 1px solid #343638;
        color: #e8e8e8;
      }
      .add {
        margin-left: auto;
      }
      .body {
        flex: 1;
        display: flex;
        flex-direction: column;
        align-items: center;
      }
      .labels,
      .digits {
        display: grid;
        grid-template-columns: 206px 35px 206px 35px 206px;
        justify-items: center;
        align-items: center;
      }
      .labels {
        margin-top: 315px;
      }
      .part {
        grid-row: 1;
      }
      .p0 { grid-column: 1; }
      .p1 { grid-column: 3; }
      .p2 { grid-column: 5; }
      .digits {
        width: 763px;
        height: 182px;
        margin-top: 19px;
        padding-top: 2px;
        justify-content: center;
        background: #292929;
        border: 2px solid #303030;
        border-bottom-color: #4a4a4a;
        border-radius: 11px;
        color: #dedede;
        font: 250 172px/172px var(--sans);
      }
      .colon {
        font-feature-settings: "case";
      }
      .pair {
        display: flex;
      }
      .pair input {
        width: 103px;
        height: 172px;
        padding: 0;
        border: 0;
        background: none;
        color: inherit;
        font: inherit;
        text-align: center;
      }
      .name,
      .sound {
        width: 346px;
        height: 36px;
        border-radius: 8px;
        font: inherit;
      }
      .name {
        margin-top: 27px;
        padding: 0 17px;
        border: 2px solid #303030;
        border-bottom-color: #4a4a4a;
        background: #292929;
        color: #e0e0e0;
      }
      .name::placeholder {
        color: #5b5b5b;
        opacity: 1;
      }
      .picker {
        position: relative;
        margin-top: 11px;
      }
      .sound {
        display: block;
        width: 348px;
        appearance: none;
        padding: 0 40px 1px 13px;
        border: 1px solid #636363;
        border-top-color: #7a7a7a;
        background: #575757;
        color: #ececec;
      }
      .stepper {
        position: absolute;
        right: 3px;
        top: 4px;
        pointer-events: none;
      }
      .actions {
        display: flex;
        gap: 35px;
        margin-top: 266px;
      }
      .action {
        width: 261px;
        height: 49px;
        padding-bottom: 2px;
        border-radius: 10px;
      }
      .cancel {
        background: #3a3a3a;
        color: #6e6e6e;
        box-shadow: inset 0 1px #444;
      }
      .start {
        background: linear-gradient(#56ab54, #4c964a);
        color: #f2f7f2;
        box-shadow: inset 0 1px #74bd72;
      }
    `,
  ];

  private pair(i: number) {
    const [unit, value] = this.fields[i];
    return html`<span class="pair">
      <input id=${unit} maxlength="1" inputmode="numeric" .value=${value[0]} />
      <input maxlength="1" inputmode="numeric" aria-label="${unit}, second digit" .value=${value[1]} />
    </span>`;
  }

  render() {
    return html`
      <header class="bar">
        <div class="lights">
          <button class="light close" aria-label="Close"></button>
          <button class="light mini" aria-label="Minimize"></button>
          <button class="light zoom" aria-label="Zoom"></button>
        </div>
        <button class="back" aria-label="Back"><svg width="15" height="26" viewBox="0 0 15 26" fill="none" stroke="#5c5e60" stroke-width="2.400" stroke-linecap="round" stroke-linejoin="round"><path d="M13 2L2 13l11 11" /></svg></button>
        <nav class="tabs" aria-label="Clock sections">
          ${["World Clock", "Alarms", "Stopwatch", "Timers"].map((t) => html`<button class=${classMap({ tab: true, on: t === "Timers" })}>${t}</button>`)}
        </nav>
        <button class="add" aria-label="Add timer"><svg width="24" height="24" viewBox="0 0 24 24" stroke="#a2a2a2" stroke-width="2.400" stroke-linecap="round"><path d="M12 1v22M1 12h22" /></svg></button>
      </header>
      <section class="body">
        <div class="labels">
          ${this.fields.map(([l], i) => html`<label class="part p${i}" for=${l}>${l}</label>`)}
        </div>
        <div class="digits">
          ${this.pair(0)}<span class="colon">:</span>${this.pair(1)}<span class="colon">:</span>${this.pair(2)}
        </div>
        <input class="name" placeholder="Timer" aria-label="Timer name" />
        <div class="picker">
          <select class="sound" aria-label="Sound"><option>Arpeggio</option></select>
          <svg class="stepper" width="28" height="28" viewBox="0 0 28 28"><rect width="28" height="28" rx="6" fill="#dd7427" /><path d="M9 11l5-5.500 5 5.500M9 17l5 5.500 5-5.500" fill="none" stroke="#fff" stroke-width="2.600" stroke-linecap="round" stroke-linejoin="round" /></svg>
        </div>
        <div class="actions">
          <button class="action cancel" disabled>Cancel</button>
          <button class="action start">Start</button>
        </div>
      </section>
    `;
  }
}

/* ---------- desktop ---------- */

@customElement("app-root")
export class AppRoot extends LitElement {
  static styles = [
    UI,
    css`
      :host {
        position: relative;
        display: flex;
        flex-direction: column;
        min-height: 100vh;
        overflow: hidden;
        background: #000;
      }
      .window {
        flex: 1;
        margin-bottom: 7px;
      }
      .clock {
        position: absolute;
        left: 12px;
        top: 80px;
        width: 1045px;
        height: 1115px;
      }
      .dock {
        position: absolute;
        left: 1015px;
        right: 1014px;
        bottom: -60px;
        height: 65px;
        border: 2px solid #3a3a3a;
        border-radius: 12px;
        background: #161616;
      }
    `,
  ];

  render() {
    return html`
      <mac-menu-bar></mac-menu-bar>
      <trade-window class="window"></trade-window>
      <clock-window class="clock"></clock-window>
      <div class="dock"></div>
    `;
  }
}
